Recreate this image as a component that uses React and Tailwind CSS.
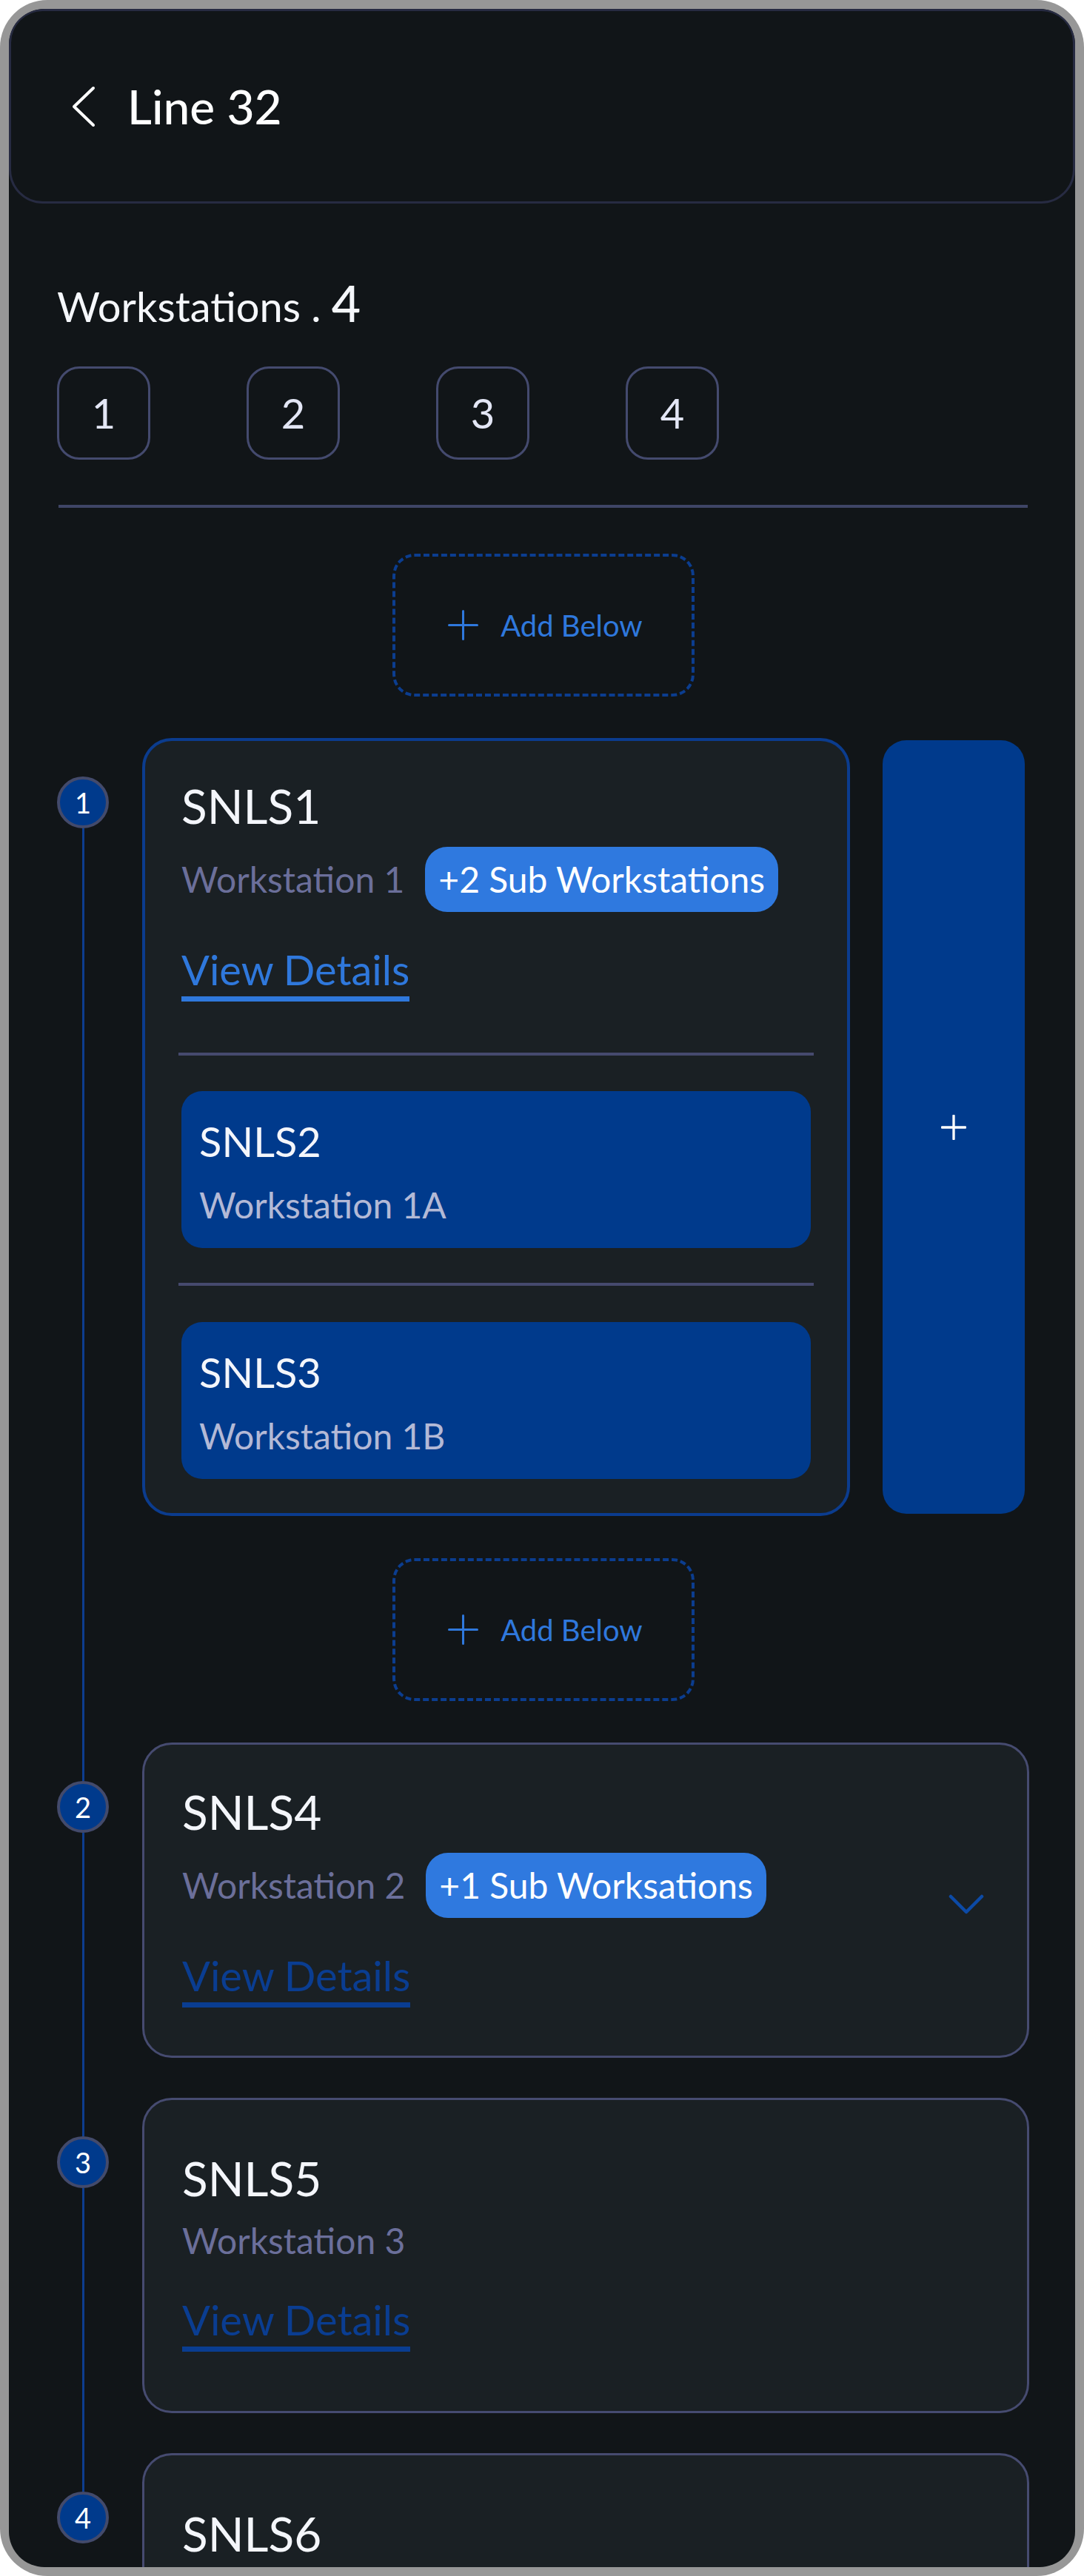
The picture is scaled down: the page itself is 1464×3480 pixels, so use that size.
const stations = [
  { code: "SNLS4", name: "Workstation 2", badge: "+1 Sub Worksations", chevron: true, num: 2 },
  { code: "SNLS5", name: "Workstation 3", num: 3 },
  { code: "SNLS6", name: "Workstation 4", num: 4, last: true },
];

function PlusIcon({ className, size = 41, stroke = 3 }) {
  return (
    <svg width={size} height={size} viewBox="0 0 41 41" className={className} fill="none">
      <path d="M20.5 1.5v38M1.5 20.5h38" stroke="currentColor" strokeWidth={stroke} strokeLinecap="round" />
    </svg>
  );
}

function AddBelow() {
  return (
    <div className="w-[408px] h-[193px] border-[4px] border-dashed border-[#0b3d8f] rounded-[30px] flex items-center justify-center gap-[30px] text-[#2f78dc]">
      <PlusIcon className="ml-[6px]" />
      <span className="text-[40px] leading-[48px]">Add Below</span>
    </div>
  );
}

function Circle({ n }) {
  return (
    <div className="w-[70px] h-[70px] shrink-0 rounded-full bg-[#003a8c] border-[4px] border-[#434a6b] flex items-center justify-center text-white text-[38px] leading-none">
      {n}
    </div>
  );
}

function Line({ className = "" }) {
  return <div className={"w-[3px] bg-[#0d3d8f] " + className} />;
}

function ViewDetails({ dark }) {
  return (
    <div className="mt-[44px]">
      <span
        className={
          "inline-block text-[56px] leading-[67px] pb-[3px] border-b-[7px] " +
          (dark ? "text-[#0a3d91] border-[#0a3d91]" : "text-[#2f78dc] border-[#2f78dc]")
        }
      >
        View Details
      </span>
    </div>
  );
}

function Info({ code, name, badge, dark }) {
  return (
    <div className="flex flex-col">
      <div className="text-[64px] leading-[77px] text-[#f4f6fb]">{code}</div>
      <div className="mt-[17px] flex items-center gap-[28px] min-h-[58px]">
        <span className="text-[48px] leading-[58px] text-[#6b6f9a]">{name}</span>
        {badge && (
          <span className="h-[88px] px-[18px] rounded-[30px] bg-[#2f79df] text-white text-[48px] leading-[58px] flex items-center">
            {badge}
          </span>
        )}
      </div>
      <ViewDetails dark={dark} />
    </div>
  );
}

function SubCard({ code, name }) {
  return (
    <div className="h-[212px] rounded-[28px] bg-[#003a8c] pl-[24px] pt-[34px]">
      <div className="text-[56px] leading-[67px] text-[#f4f6fb]">{code}</div>
      <div className="mt-[24px] text-[48px] leading-[58px] text-[#b3b9d6]">{name}</div>
    </div>
  );
}

export default function App() {
  return (
    <div className="w-[1464px] h-[3480px] bg-white font-[Lato,sans-serif]">
      <div className="h-full rounded-[64px] bg-[#979797] p-[12px]">
        <div className="h-full rounded-[48px] bg-[#111518] overflow-hidden">
          {/* header */}
          <div className="h-[263px] border-[3px] border-[#272b42] rounded-[46px] flex items-center pl-[81px] gap-[42px]">
            <svg width="34" height="58" viewBox="0 0 34 58" fill="none">
              <path d="M30 4L4 29l26 25" stroke="white" strokeWidth="4" strokeLinecap="round" strokeLinejoin="round" />
            </svg>
            <span className="text-[64px] leading-[80px] font-medium text-white">Line 32</span>
          </div>

          <div className="pl-[65px] pr-[62px]">
            {/* workstations count */}
            <div className="pt-[100px] flex items-baseline text-[#f5f7fb]">
              <span className="text-[56px] leading-[68px]">Workstations .&nbsp;</span>
              <span className="text-[68px] leading-[68px] font-medium">4</span>
            </div>
            <div className="mt-[47px] flex gap-[130px]">
              {[1, 2, 3, 4].map((n) => (
                <div
                  key={n}
                  className="w-[126px] h-[126px] rounded-[30px] border-[3px] border-[#444a6e] flex items-center justify-center text-[56px] leading-none text-[#e3e6f5]"
                >
                  {n}
                </div>
              ))}
            </div>
            <div className="mt-[61px] mx-[2px] h-[4px] bg-[#3f4566]" />

            <div className="mt-[62px] pb-[56px] flex justify-center">
              <AddBelow />
            </div>

            {/* row 1 */}
            <div className="flex">
              <div className="w-[70px] shrink-0 flex flex-col items-center pt-[52px]">
                <Circle n={1} />
                <Line className="flex-1" />
              </div>
              <div className="ml-[45px] flex-1 flex gap-[44px] pr-[6px] pb-[57px]">
                <div className="flex-1 border-[4px] border-[#0b3c8e] bg-[#1a2024] rounded-[40px] pt-[49px] pb-[46px] px-[49px]">
                  <Info code="SNLS1" name="Workstation 1" badge="+2 Sub Workstations" />
                  <div className="mt-[69px] -mx-[4px] h-[4px] bg-[#464a6e]" />
                  <div className="mt-[48px]">
                    <SubCard code="SNLS2" name="Workstation 1A" />
                  </div>
                  <div className="mt-[47px] -mx-[4px] h-[4px] bg-[#464a6e]" />
                  <div className="mt-[49px]">
                    <SubCard code="SNLS3" name="Workstation 1B" />
                  </div>
                </div>
                <div className="w-[192px] my-[3px] rounded-[32px] bg-[#003a8c] flex items-center justify-center text-white">
                  <PlusIcon size={34} stroke={4} />
                </div>
              </div>
            </div>

            {/* add below between */}
            <div className="flex">
              <div className="w-[70px] shrink-0 flex justify-center">
                <Line />
              </div>
              <div className="ml-[45px] flex-1 flex justify-center pr-[115px] pb-[56px]">
                <AddBelow />
              </div>
            </div>

            {stations.map((s) => (
              <div key={s.code} className="flex">
                <div className="w-[70px] shrink-0 flex flex-col items-center">
                  <Line className="h-[52px]" />
                  <Circle n={s.num} />
                  {!s.last && <Line className="flex-1" />}
                </div>
                <div className="ml-[45px] flex-1 pb-[54px]">
                  <div className="h-[426px] border-[3px] border-[#464b70] bg-[#1a2024] rounded-[40px] pl-[51px] pr-[50px] pt-[44px] pb-[58px] flex items-center justify-between">
                    <Info code={s.code} name={s.name} badge={s.badge} dark />
                    {s.chevron && (
                      <svg width="48" height="28" viewBox="0 0 48 28" fill="none" className="mt-[26px] mr-[8px]">
                        <path d="M3 3l21 21L45 3" stroke="#0c4aa6" strokeWidth="4.5" strokeLinecap="round" strokeLinejoin="round" />
                      </svg>
                    )}
                  </div>
                </div>
              </div>
            ))}
          </div>
        </div>
      </div>
    </div>
  );
}
